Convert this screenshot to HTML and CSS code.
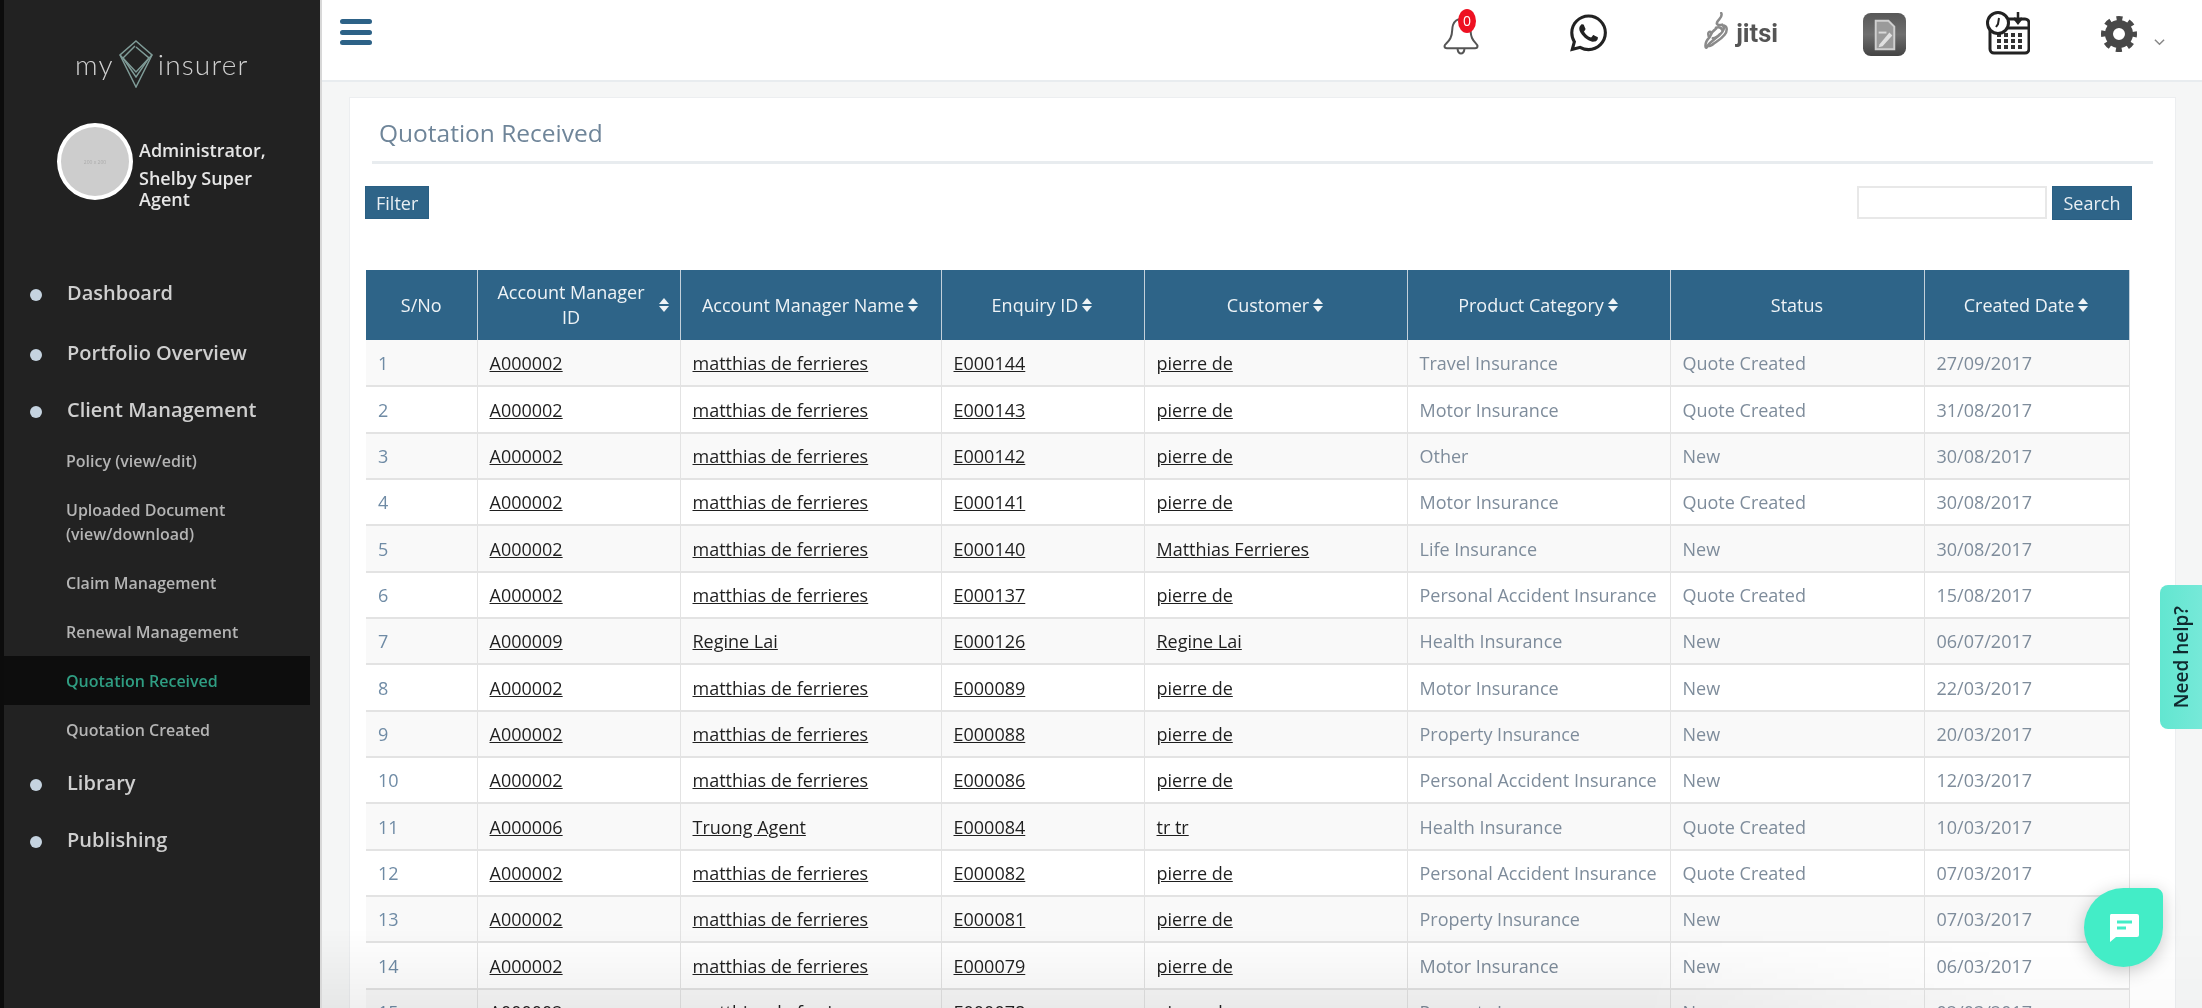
FILE: index.html
```html
<!DOCTYPE html>
<html lang="en">
<head>
<meta charset="utf-8">
<title>Quotation Received</title>
<link rel="stylesheet" href="styles.css">
</head>
<body>
<div class="app">
  <aside class="sidebar">
    <div class="logo">
      <span class="logo-text">my</span>
      <svg class="logo-mark" viewBox="0 0 36 48" fill="none" stroke="#7f9b97" stroke-width="1.5">
        <path d="M18 1 34 15 18 47 2 15Z"/>
        <path d="M18 7 31 18 18 37 5 18 17 6"/>
        <path d="M2 15 18 32 34 15"/>
      </svg>
      <span class="logo-text">insurer</span>
    </div>
    <div class="user">
      <div class="avatar">200 x 200</div>
      <div class="user-name">
        <div class="user-role">Administrator,</div>
        <div>Shelby Super Agent</div>
      </div>
    </div>
    <nav class="nav">
      <a class="nav-main nav-first">Dashboard</a>
      <a class="nav-main">Portfolio Overview</a>
      <a class="nav-main">Client Management</a>
      <div class="nav-sub">
        <a class="sub-item">Policy (view/edit)</a>
        <a class="sub-item">Uploaded Document (view/download)</a>
        <a class="sub-item">Claim Management</a>
        <a class="sub-item">Renewal Management</a>
        <a class="sub-item active">Quotation Received</a>
        <a class="sub-item">Quotation Created</a>
      </div>
      <a class="nav-main">Library</a>
      <a class="nav-main">Publishing</a>
    </nav>
  </aside>

  <div class="main">
    <header class="topbar">
      <div class="hamburger"><span></span><span></span><span></span></div>
      <div class="top-icons">
        <div class="icon-bell">
          <svg width="36" height="46" viewBox="0 0 36 46" fill="none" stroke="#555" stroke-width="2" stroke-linejoin="round">
            <path d="M1.500 36c0 1.500 1 2.300 2.500 2.300h28c1.500 0 2.500-.8 2.500-2.300 0-2-3.500-3.500-5.500-8-2-4.500-1-9-2.500-13C25 11 21.500 9 18 9s-6.500 2-8 6c-1.500 4 0 8.500-2.500 13-2 4.500-6 6-6 8Z"/>
            <path d="M14.500 39c.5 3 2 4.500 3.500 4.500s3-1.500 3.500-4.500"/>
          </svg>
          <span class="badge">0</span>
        </div>
        <svg class="icon-wa" viewBox="0 0 24 24" fill="#222"><path d="M17.472 14.382c-.297-.149-1.758-.867-2.03-.967-.273-.099-.471-.148-.67.15-.197.297-.767.966-.94 1.164-.173.199-.347.223-.644.075-.297-.15-1.255-.463-2.39-1.475-.883-.788-1.48-1.761-1.653-2.059-.173-.297-.018-.458.13-.606.134-.133.298-.347.446-.52.149-.174.198-.298.298-.497.099-.198.05-.371-.025-.52-.075-.149-.669-1.612-.916-2.207-.242-.579-.487-.5-.669-.51-.173-.008-.371-.01-.57-.01-.198 0-.52.074-.792.372-.272.297-1.04 1.016-1.04 2.479 0 1.462 1.065 2.875 1.213 3.074.149.198 2.096 3.2 5.077 4.487.709.306 1.262.489 1.694.625.712.227 1.36.195 1.871.118.571-.085 1.758-.719 2.006-1.413.248-.694.248-1.289.173-1.413-.074-.124-.272-.198-.57-.347m-5.421 7.403h-.004a9.87 9.87 0 01-5.031-1.378l-.361-.214-3.741.982.998-3.648-.235-.374a9.86 9.86 0 01-1.51-5.26c.001-5.45 4.436-9.884 9.888-9.884 2.64 0 5.122 1.03 6.988 2.898a9.825 9.825 0 012.893 6.994c-.003 5.45-4.437 9.884-9.885 9.884m8.413-18.297A11.815 11.815 0 0012.05 0C5.495 0 .16 5.335.157 11.892c0 2.096.547 4.142 1.588 5.945L.057 24l6.305-1.654a11.882 11.882 0 005.683 1.448h.005c6.554 0 11.89-5.335 11.893-11.893a11.821 11.821 0 00-3.48-8.413Z"/></svg>
        <div class="icon-jitsi">
          <svg width="32" height="42" viewBox="0 0 28 40" fill="none" stroke="#8a8a8a" stroke-width="2.400" stroke-linecap="round" stroke-linejoin="round">
            <path d="M18 1c2 4-3 6-4 9-1 2 2 3 5 2 3 3 1 7-3 10-4 4-8 6-10 9-1 2-3 5-3 1s2-6 4-8c1-3 3-6 6-8"/>
            <path d="M21 13c3 1 3 6 0 9-3 4-7 6-10 8-2 2-5 3-6 2M10 25c3 0 5-2 7-4M8 19c-2-1-3 2-2 4M13 15c3-1 5 0 6 2"/>
          </svg>
          <span class="jitsi-text">jitsi</span>
        </div>
        <svg class="icon-doc" viewBox="0 0 44 44">
          <defs><linearGradient id="docfill" x1="0" y1="0" x2="0" y2="1"><stop offset="0" stop-color="#585858"/><stop offset=".5" stop-color="#6e6e6e"/><stop offset="1" stop-color="#444"/></linearGradient></defs>
          <rect width="44" height="44" rx="8" fill="url(#docfill)"/>
          <path d="M13 8h13l6 6v23H13Z" fill="#9a9a9a" stroke="#cfcfcf" stroke-width="2"/>
          <path d="M16 20h8" stroke="#d8d8d8" stroke-width="2"/>
          <path d="M17 32l10-12 3 3-10 11-4 1Z" fill="#e0e0e0"/>
        </svg>
        <svg class="icon-cal" viewBox="0 0 44 44" fill="none">
          <rect x="4" y="8" width="39" height="34" rx="4" fill="#fff" stroke="#222" stroke-width="3"/>
          <path d="M4 17h39" stroke="#222" stroke-width="3"/>
          <path d="M32 1v10M28 7l4 5 4-5" stroke="#222" stroke-width="2.500"/>
          <g fill="#333">
            <rect x="11" y="22" width="4" height="4"/><rect x="18" y="22" width="4" height="4"/><rect x="25" y="22" width="4" height="4"/><rect x="32" y="22" width="4" height="4"/>
            <rect x="11" y="28" width="4" height="4"/><rect x="18" y="28" width="4" height="4"/><rect x="25" y="28" width="4" height="4"/><rect x="32" y="28" width="4" height="4"/>
            <rect x="11" y="34" width="4" height="4"/><rect x="18" y="34" width="4" height="4"/><rect x="25" y="34" width="4" height="4"/><rect x="32" y="34" width="4" height="4"/>
          </g>
          <circle cx="12" cy="12" r="10.500" fill="#fff" stroke="#222" stroke-width="3"/>
          <path d="M13 7l-1 6-2 3" stroke="#222" stroke-width="2"/>
        </svg>
        <svg class="icon-gear" viewBox="0 0 36 36" fill="none" stroke="#484848">
          <circle cx="18" cy="18" r="10" stroke-width="8"/>
          <circle cx="18" cy="18" r="15" stroke-width="6" stroke-dasharray="5.800 5.980" stroke-dashoffset="2.900"/>
        </svg>
        <svg class="icon-chev" viewBox="0 0 12 8" fill="none" stroke="#888" stroke-width="1.600"><path d="M1 1.500 6 6.500 11 1.500"/></svg>
      </div>
    </header>

    <main class="content">
      <section class="card">
        <h1 class="title">Quotation Received</h1>
        <div class="toolbar">
          <button class="btn">Filter</button>
          <div class="search">
            <input class="search-input" type="text" aria-label="Search">
            <button class="btn btn-search">Search</button>
          </div>
        </div>
        <table class="grid">
          <colgroup>
            <col class="c1"><col class="c2"><col class="c3"><col class="c4"><col class="c5"><col class="c6"><col class="c7"><col class="c8">
          </colgroup>
          <thead>
            <tr>
              <th>S/No</th>
              <th><div class="th-wrap"><span class="th-narrow">Account Manager ID</span><i class="sort"></i></div></th>
              <th><div class="th-wrap">Account Manager Name<i class="sort"></i></div></th>
              <th><div class="th-wrap">Enquiry ID<i class="sort"></i></div></th>
              <th><div class="th-wrap">Customer<i class="sort"></i></div></th>
              <th><div class="th-wrap">Product Category<i class="sort"></i></div></th>
              <th>Status</th>
              <th><div class="th-wrap">Created Date<i class="sort"></i></div></th>
            </tr>
          </thead>
          <tbody>
            <tr><td class="num">1</td><td><a>A000002</a></td><td><a>matthias de ferrieres</a></td><td><a>E000144</a></td><td><a>pierre de</a></td><td>Travel Insurance</td><td>Quote Created</td><td>27/09/2017</td></tr>
            <tr><td class="num">2</td><td><a>A000002</a></td><td><a>matthias de ferrieres</a></td><td><a>E000143</a></td><td><a>pierre de</a></td><td>Motor Insurance</td><td>Quote Created</td><td>31/08/2017</td></tr>
            <tr><td class="num">3</td><td><a>A000002</a></td><td><a>matthias de ferrieres</a></td><td><a>E000142</a></td><td><a>pierre de</a></td><td>Other</td><td>New</td><td>30/08/2017</td></tr>
            <tr><td class="num">4</td><td><a>A000002</a></td><td><a>matthias de ferrieres</a></td><td><a>E000141</a></td><td><a>pierre de</a></td><td>Motor Insurance</td><td>Quote Created</td><td>30/08/2017</td></tr>
            <tr><td class="num">5</td><td><a>A000002</a></td><td><a>matthias de ferrieres</a></td><td><a>E000140</a></td><td><a>Matthias Ferrieres</a></td><td>Life Insurance</td><td>New</td><td>30/08/2017</td></tr>
            <tr><td class="num">6</td><td><a>A000002</a></td><td><a>matthias de ferrieres</a></td><td><a>E000137</a></td><td><a>pierre de</a></td><td>Personal Accident Insurance</td><td>Quote Created</td><td>15/08/2017</td></tr>
            <tr><td class="num">7</td><td><a>A000009</a></td><td><a>Regine Lai</a></td><td><a>E000126</a></td><td><a>Regine Lai</a></td><td>Health Insurance</td><td>New</td><td>06/07/2017</td></tr>
            <tr><td class="num">8</td><td><a>A000002</a></td><td><a>matthias de ferrieres</a></td><td><a>E000089</a></td><td><a>pierre de</a></td><td>Motor Insurance</td><td>New</td><td>22/03/2017</td></tr>
            <tr><td class="num">9</td><td><a>A000002</a></td><td><a>matthias de ferrieres</a></td><td><a>E000088</a></td><td><a>pierre de</a></td><td>Property Insurance</td><td>New</td><td>20/03/2017</td></tr>
            <tr><td class="num">10</td><td><a>A000002</a></td><td><a>matthias de ferrieres</a></td><td><a>E000086</a></td><td><a>pierre de</a></td><td>Personal Accident Insurance</td><td>New</td><td>12/03/2017</td></tr>
            <tr><td class="num">11</td><td><a>A000006</a></td><td><a>Truong Agent</a></td><td><a>E000084</a></td><td><a>tr tr</a></td><td>Health Insurance</td><td>Quote Created</td><td>10/03/2017</td></tr>
            <tr><td class="num">12</td><td><a>A000002</a></td><td><a>matthias de ferrieres</a></td><td><a>E000082</a></td><td><a>pierre de</a></td><td>Personal Accident Insurance</td><td>Quote Created</td><td>07/03/2017</td></tr>
            <tr><td class="num">13</td><td><a>A000002</a></td><td><a>matthias de ferrieres</a></td><td><a>E000081</a></td><td><a>pierre de</a></td><td>Property Insurance</td><td>New</td><td>07/03/2017</td></tr>
            <tr><td class="num">14</td><td><a>A000002</a></td><td><a>matthias de ferrieres</a></td><td><a>E000079</a></td><td><a>pierre de</a></td><td>Motor Insurance</td><td>New</td><td>06/03/2017</td></tr>
            <tr><td class="num">15</td><td><a>A000002</a></td><td><a>matthias de ferrieres</a></td><td><a>E000078</a></td><td><a>pierre de</a></td><td>Property Insurance</td><td>New</td><td>02/03/2017</td></tr>
          </tbody>
        </table>
      </section>
    </main>
  </div>

  <div class="bottom-fade"></div>
  <div class="need-help"><span class="need-help-text">Need help?</span></div>
  <div class="chat-btn">
    <svg width="32" height="30" viewBox="0 0 32 30">
      <path d="M3 1h26a2 2 0 0 1 2 2v19a2 2 0 0 1-2 2H8l-6 5V3a2 2 0 0 1 1-2Z" fill="#fff"/>
      <path d="M9 9h15M9 15h9" stroke="#43edc7" stroke-width="3"/>
    </svg>
  </div>
</div>
</body>
</html>
```
FILE: styles.css
```css
* { box-sizing: border-box; }
html, body { margin: 0; height: 100%; overflow: hidden; }
body { font-family: "Open Sans", "Liberation Sans", sans-serif; background: #f5f6f6; }

/* The soft focus of the page runs past the window edge, so the edge stays crisp. */
.app {
  display: flex;
  width: 2210px;
  height: 1016px;
  margin: -4px;
  padding: 4px;
  overflow: hidden;
  position: relative;
  background: linear-gradient(to right, #0c0c0c 8px, #222 8px, #222 326px, #f5f6f6 326px);
  filter: blur(0.7px);
}

/* Sidebar */
.sidebar {
  flex: 0 0 322px;
  background: #222;
  border-left: 4px solid #0c0c0c;
  border-right: 2px solid #d8d8d8;
  color: #ddd;
}
.logo {
  display: flex;
  align-items: center;
  height: 50px;
  margin-top: 39px;
  padding-left: 71px;
}
.logo-text {
  font-family: "Lato", sans-serif;
  font-weight: 300;
  font-size: 28px;
  color: #d0d0d0;
  letter-spacing: 1.2px;
}
.logo-mark { width: 36px; height: 48px; margin: 0 4px 0 4px; }
.user {
  display: flex;
  align-items: flex-start;
  margin-top: 34px;
  padding-left: 53px;
}
.avatar {
  flex: 0 0 76px;
  height: 77px;
  border-radius: 50%;
  background: #cdcdcd;
  border: 4px solid #fff;
  font-size: 5px;
  color: #aaa;
  display: flex;
  align-items: center;
  justify-content: center;
}
.user-name {
  width: 150px;
  margin: 17px 0 0 6px;
  font-size: 18px;
  font-weight: 600;
  line-height: 21px;
  color: #e6e6e6;
}
.user-role { margin-bottom: 7px; }
.nav { margin-top: 54px; }
.nav-main {
  display: flex;
  align-items: center;
  height: 57px;
  padding-left: 63px;
  font-size: 20px;
  font-weight: 600;
  color: #cfcfcf;
  position: relative;
}
.nav-first { margin-bottom: 3px; }
.nav-main::before {
  content: "";
  position: absolute;
  left: 26px;
  top: 50%;
  width: 12px;
  height: 12px;
  margin-top: -4px;
  border-radius: 50%;
  background: #c5d3e0;
}
.nav-sub { margin-top: -2px; }
.sub-item {
  display: block;
  width: 306px;
  padding: 12.5px 40px 12.5px 62px;
  font-size: 16px;
  font-weight: 600;
  line-height: 24px;
  color: #b4b4b4;
}
.sub-item.active { background: #0d0d0d; color: #2f9d82; }

/* Main */
.main { flex: 1; min-width: 0; display: flex; flex-direction: column; }
.topbar {
  flex: 0 0 82px;
  background: #fff;
  border-bottom: 2px solid #e8ecef;
  display: flex;
  align-items: flex-start;
  justify-content: space-between;
  padding-left: 18px;
}
.hamburger {
  display: flex;
  flex-direction: column;
  gap: 5.500px;
  width: 32px;
  margin-top: 19px;
}
.hamburger span { height: 5px; border-radius: 3px; background: #2d6287; }
.top-icons { display: flex; align-items: flex-start; padding-right: 37px; }
.icon-bell { position: relative; width: 36px; height: 46px; margin-top: 10px; }
.badge {
  position: absolute;
  left: 15px;
  top: -1px;
  width: 18px;
  height: 24px;
  border-radius: 50%;
  background: #ee1122;
  color: #fff;
  font-size: 14px;
  line-height: 24px;
  text-align: center;
}
.icon-wa { width: 37px; height: 38px; margin: 14px 0 0 91px; }
.icon-jitsi { display: flex; align-items: center; margin: 12px 0 0 94px; height: 42px; }
.jitsi-text {
  font-family: "Roboto", sans-serif;
  font-weight: 700;
  font-size: 25.5px;
  color: #555;
  margin-left: 3px;
}
.icon-doc { width: 43px; height: 43px; margin: 13px 0 0 85px; }
.icon-cal { width: 44px; height: 44px; margin: 11px 0 0 80px; }
.icon-gear { width: 36px; height: 36px; margin: 16px 0 0 71px; }
.icon-chev { width: 11px; height: 8px; margin: 38px 0 0 17px; }

.content { flex: 1; padding: 15px 26px 0 27px; min-height: 0; }
.card { background: #fff; border: 1px solid #eceef0; height: 1200px; }
.title {
  margin: 0 22px;
  padding: 17px 0 12px 7px;
  height: 66px;
  font-size: 24.5px;
  font-weight: 400;
  line-height: 36px;
  color: #6f8599;
  border-bottom: 3px solid #e8ecef;
}
.toolbar {
  display: flex;
  justify-content: space-between;
  align-items: flex-start;
  padding: 22px 43px 0 15px;
  height: 106px;
}
.btn {
  height: 33px;
  padding: 0 10px;
  border: 1px solid #2a5f83;
  background: #2e6488;
  color: #e9eff3;
  font: 400 18px/1 "Open Sans", sans-serif;
}
.search { display: flex; gap: 5px; }
.search-input { width: 190px; height: 33px; border: 2px solid #e8e8e8; background: #fff; padding: 0; }
.btn-search { height: 34px; width: 80px; padding: 0; }

.grid {
  table-layout: fixed;
  width: 1763px;
  margin-left: 16px;
  border-collapse: collapse;
  font-size: 18px;
  color: #7e8c9b;
}
.c1 { width: 111px; } .c2 { width: 203px; } .c3 { width: 261px; } .c4 { width: 203px; }
.c5 { width: 263px; } .c6 { width: 263px; } .c7 { width: 254px; } .c8 { width: 205px; }
.grid th {
  height: 70px;
  background: #2e6488;
  color: #eef3f6;
  font-weight: 400;
  padding: 0 10px;
  border: 1px solid #c3d0da;
  border-width: 0 1px;
  text-align: center;
  line-height: 25px;
}
.grid th:first-child, .grid td:first-child { border-left: 0; }
.th-wrap { display: flex; align-items: center; justify-content: center; gap: 4px; }
.th-narrow { width: 168px; }
.sort { position: relative; display: inline-block; width: 11px; height: 14px; flex: none; }
.sort::before, .sort::after {
  content: "";
  position: absolute;
  left: 0;
  border: 5.500px solid transparent;
}
.sort::before { top: -5px; border-bottom: 6px solid #eef3f6; }
.sort::after { bottom: -5px; border-top: 6px solid #eef3f6; }
.grid td {
  height: 46.35px;
  padding: 0 12px;
  border: 1px solid #e3e3e3;
  border-width: 0 1px 2px;
  white-space: nowrap;
  background: #fff;
}
.grid tbody tr:nth-child(odd) td { background: #f9f9f9; }
.grid td.num { color: #6f8ba5; }
.grid a { color: #1f1f1f; text-decoration: underline; }

/* Overlays */
.bottom-fade {
  position: absolute;
  left: 326px;
  right: 4px;
  bottom: 4px;
  height: 80px;
  pointer-events: none;
  background: linear-gradient(to bottom, rgba(0,0,0,0), rgba(0,0,0,.06));
  -webkit-mask-image: linear-gradient(to right, #000 70%, rgba(0,0,0,.25) 90%);
  mask-image: linear-gradient(to right, #000 70%, rgba(0,0,0,.25) 90%);
}
.need-help {
  position: absolute;
  right: 0;
  top: 589px;
  width: 46px;
  padding-right: 4px;
  height: 144px;
  border-radius: 8px 0 0 8px;
  background: linear-gradient(to right, #62e6d0, #78e9d9);
  display: flex;
  align-items: center;
  justify-content: center;
}
.need-help-text {
  writing-mode: vertical-rl;
  transform: rotate(180deg);
  font-size: 19px;
  font-weight: 600;
  color: #10292f;
}
.chat-btn {
  position: absolute;
  left: 2088px;
  top: 892px;
  width: 79px;
  height: 79px;
  border-radius: 50% 8px 50% 50%;
  background: #43edc7;
  box-shadow: 0 4px 18px rgba(0,0,0,.22);
  display: flex;
  align-items: center;
  justify-content: center;
}
```
